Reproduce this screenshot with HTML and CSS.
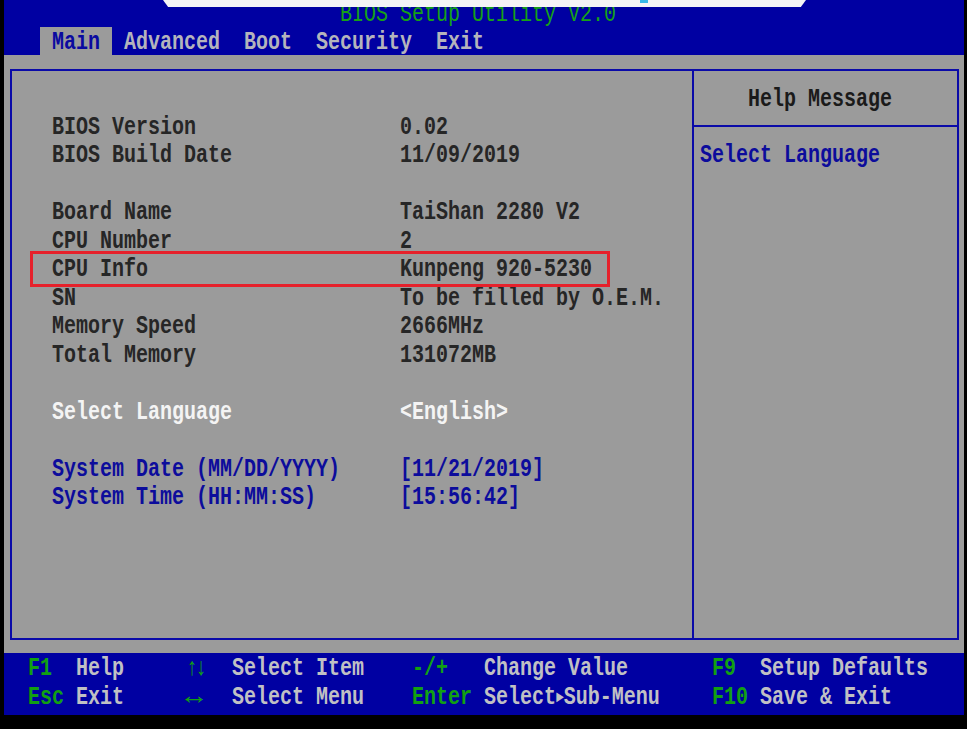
FILE: index.html
```html
<!DOCTYPE html>
<html lang="en">
<head>
<meta charset="utf-8">
<title>BIOS Setup Utility V2.0</title>
<link rel="stylesheet" href="styles.css">
</head>
<body>
<div class="screen">
  <div class="notice"><span class="notice-mark"></span></div>
  <header class="top">
    <div class="title"><span class="g">BIOS Setup Utility V2.0</span></div>
    <nav class="tabs">
      <span class="tab active"><span class="g">Main</span></span>
      <span class="tab"><span class="g">Advanced</span></span>
      <span class="tab"><span class="g">Boot</span></span>
      <span class="tab"><span class="g">Security</span></span>
      <span class="tab"><span class="g">Exit</span></span>
    </nav>
  </header>
  <main class="body">
    <div class="frame">
      <section class="info">
        <div class="cell"><span class="g">BIOS Version</span></div><div class="cell"><span class="g">0.02</span></div>
        <div class="cell"><span class="g">BIOS Build Date</span></div><div class="cell"><span class="g">11/09/2019</span></div>
        <div class="blank"></div>
        <div class="cell"><span class="g">Board Name</span></div><div class="cell"><span class="g">TaiShan 2280 V2</span></div>
        <div class="cell"><span class="g">CPU Number</span></div><div class="cell"><span class="g">2</span></div>
        <div class="cell"><span class="g">CPU Info</span></div><div class="cell"><span class="g">Kunpeng 920-5230</span></div>
        <div class="cell"><span class="g">SN</span></div><div class="cell"><span class="g">To be filled by O.E.M.</span></div>
        <div class="cell"><span class="g">Memory Speed</span></div><div class="cell"><span class="g">2666MHz</span></div>
        <div class="cell"><span class="g">Total Memory</span></div><div class="cell"><span class="g">131072MB</span></div>
        <div class="blank"></div>
        <div class="cell selected"><span class="g">Select Language</span></div><div class="cell selected"><span class="g">&lt;English&gt;</span></div>
        <div class="blank"></div>
        <div class="cell option"><span class="g">System Date (MM/DD/YYYY)</span></div><div class="cell option"><span class="g">[11/21/2019]</span></div>
        <div class="cell option"><span class="g">System Time (HH:MM:SS)</span></div><div class="cell option"><span class="g">[15:56:42]</span></div>
      </section>
      <aside class="help">
        <div class="help-head"><span class="g">Help Message</span></div>
        <div class="help-text"><span class="g">Select Language</span></div>
      </aside>
    </div>
    <div class="highlight"></div>
  </main>
  <footer class="keys">
    <div class="k"><span class="g">F1</span></div><div class="d"><span class="g">Help</span></div>
    <div class="k"><span class="g arrows-v">↑↓</span></div><div class="d"><span class="g">Select Item</span></div>
    <div class="k"><span class="g">-/+</span></div><div class="d"><span class="g">Change Value</span></div>
    <div class="k"><span class="g">F9</span></div><div class="d"><span class="g">Setup Defaults</span></div>
    <div class="k"><span class="g">Esc</span></div><div class="d"><span class="g">Exit</span></div>
    <div class="k"><span class="g arrows">↔</span></div><div class="d"><span class="g">Select Menu</span></div>
    <div class="k"><span class="g">Enter</span></div><div class="d"><span class="g">Select<span class="tri">►</span>Sub-Menu</span></div>
    <div class="k"><span class="g">F10</span></div><div class="d"><span class="g">Save &amp; Exit</span></div>
  </footer>
</div>
</body>
</html>
```
FILE: styles.css
```css
* {
  box-sizing: border-box;
  margin: 0;
  padding: 0;
}

html,
body {
  background: #000;
}

body {
  margin: 0;
  font-family: "Liberation Mono", "DejaVu Sans Mono", monospace;
  font-size: 20px;
  font-weight: bold;
}

.screen {
  position: relative;
  width: 960px;
  height: 715px;
  margin-left: 4px;
  display: flex;
  flex-direction: column;
}

.g {
  display: inline-block;
  white-space: pre;
  transform: translateY(2px) scaleY(1.25);
}

/* overlay notice bar at very top */
.notice {
  position: absolute;
  left: 159px;
  top: 0;
  width: 643px;
  height: 7px;
  background: #f4f4f6;
  clip-path: polygon(0 0, 100% 0, 99.2% 100%, 0.8% 100%);
  z-index: 5;
}

.notice-mark {
  position: absolute;
  left: 477px;
  top: 0;
  width: 8px;
  height: 3px;
  background: #39b8e8;
}

.top {
  background: #0000a2;
  height: 55px;
  flex: none;
}

.title {
  height: 26.5px;
  line-height: 26.5px;
  padding-left: 336px;
  color: #16a016;
  font-weight: normal;
}

.tabs {
  display: flex;
  height: 28.5px;
  padding-left: 36px;
}

.tab {
  padding: 0 12px;
  line-height: 28.5px;
  color: #b4b4bc;
}

.tab.active {
  background: #9b9b9b;
  color: #0a0aa0;
}

.body {
  position: relative;
  background: #9b9b9b;
  height: 598px;
  flex: none;
  padding: 14px 5px 13px 6px;
}

.frame {
  display: flex;
  height: 100%;
  border: 2px solid #0a0aa8;
}

.info {
  flex: 1;
  display: grid;
  grid-template-columns: 348px 1fr;
  grid-auto-rows: 28.5px;
  align-content: start;
  padding: 40.75px 0 0 40px;
  color: #262626;
}

.cell {
  line-height: 28.5px;
}

.blank {
  grid-column: 1 / -1;
}

.cell.selected {
  color: #f4f4f4;
}

.cell.option {
  color: #0c0c9c;
}

.help {
  width: 265px;
  flex: none;
  border-left: 2px solid #0a0aa8;
}

.help-head {
  height: 56px;
  padding: 13px 0 0 54px;
  line-height: 28.5px;
  border-bottom: 2px solid #0a0aa8;
  color: #1a1a1a;
}

.help-text {
  padding: 13.25px 0 0 6px;
  line-height: 28.5px;
  color: #0c0c9c;
}

.highlight {
  position: absolute;
  left: 26px;
  top: 196px;
  width: 580px;
  height: 36px;
  border: 3px solid #e6212b;
}

.keys {
  background: #0000a2;
  height: 62px;
  flex: none;
  display: grid;
  grid-template-columns: 48px 108px 48px 180px 72px 228px 48px 1fr;
  grid-auto-rows: 28.5px;
  padding-left: 24px;
}

.k,
.d {
  line-height: 28.5px;
}

.k {
  color: #12a012;
}

.d {
  color: #c0c0c4;
}

.arrows-v {
  letter-spacing: -3px;
  padding-left: 2px;
}

.arrows {
  transform: translate(4px, 2px) scale(1.5, 1.25);
}

.tri {
  font-size: 13px;
  vertical-align: 2px;
}
```
